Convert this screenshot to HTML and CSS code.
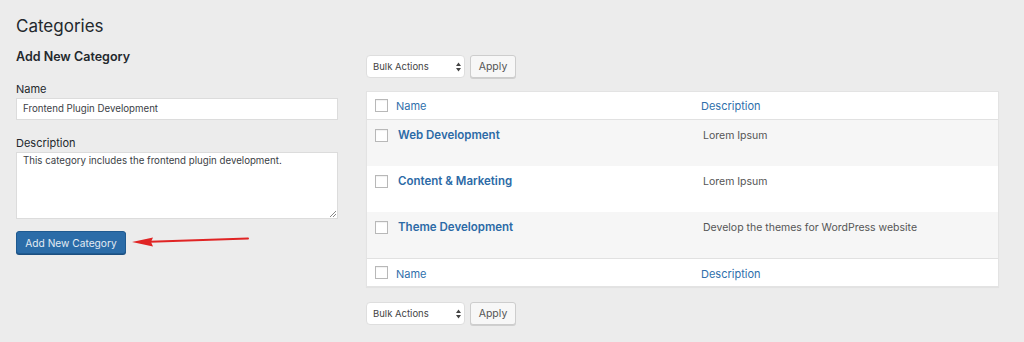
FILE: index.html
```html
<!DOCTYPE html>
<html>
<head>
<meta charset="utf-8">
<link rel="stylesheet" href="styles.css">
</head>
<body>
<div class="wrap">
  <h1 class="title">Categories</h1>
  <div class="cols">
    <div class="left">
      <h2 class="subtitle">Add New Category</h2>
      <label class="label label-name">Name</label>
      <div class="input">Frontend Plugin Development</div>
      <label class="label label-desc">Description</label>
      <div class="textarea">This category includes the frontend plugin development.
        <svg class="grip" width="7" height="7" viewBox="0 0 7 7"><path d="M1 7 L7 1 M4 7 L7 4" stroke="#888" stroke-width="1" fill="none"/></svg>
      </div>
      <div class="submit-row">
        <button class="btn-primary">Add New Category</button>
        <svg class="arrow" width="118" height="12" viewBox="0 0 118 12">
          <path d="M116 2.5 L18 5.8" stroke="#e02424" stroke-width="2" fill="none" stroke-linecap="round"/>
          <path d="M0 6 L21 1.5 L19 6 L21 10.5 Z" fill="#e02424"/>
        </svg>
      </div>
    </div>
    <div class="right">
      <div class="tablenav">
        <div class="select">Bulk Actions<span class="sel-arrows"><svg width="5" height="10" viewBox="0 0 5 10"><path d="M0 4 L2.5 0.5 L5 4 Z M0 6 L2.5 9.5 L5 6 Z" fill="#444"/></svg></span></div>
        <button class="btn">Apply</button>
      </div>
      <div class="table">
        <div class="row head">
          <div class="cb"><span class="check"></span></div>
          <div class="col-name"><a class="hlink">Name</a></div>
          <div class="col-desc"><a class="hlink">Description</a></div>
        </div>
        <div class="row item alt">
          <div class="cb"><span class="check"></span></div>
          <div class="col-name"><a class="name">Web Development</a></div>
          <div class="col-desc desc">Lorem Ipsum</div>
        </div>
        <div class="row item">
          <div class="cb"><span class="check"></span></div>
          <div class="col-name"><a class="name">Content &amp; Marketing</a></div>
          <div class="col-desc desc">Lorem Ipsum</div>
        </div>
        <div class="row item alt">
          <div class="cb"><span class="check"></span></div>
          <div class="col-name"><a class="name">Theme Development</a></div>
          <div class="col-desc desc">Develop the themes for WordPress website</div>
        </div>
        <div class="row foot">
          <div class="cb"><span class="check"></span></div>
          <div class="col-name"><a class="hlink">Name</a></div>
          <div class="col-desc"><a class="hlink">Description</a></div>
        </div>
      </div>
      <div class="tablenav bottom">
        <div class="select">Bulk Actions<span class="sel-arrows"><svg width="5" height="10" viewBox="0 0 5 10"><path d="M0 4 L2.5 0.5 L5 4 Z M0 6 L2.5 9.5 L5 6 Z" fill="#444"/></svg></span></div>
        <button class="btn">Apply</button>
      </div>
    </div>
  </div>
</div>
</body>
</html>
```

FILE: styles.css
```css
html, body {
  margin: 0;
  padding: 0;
  background: #ececec;
  font-family: Inter, "Noto Sans", "Liberation Sans", sans-serif;
  color: #23282d;
}
.wrap {
  padding: 12px 25px 0 16px;
}
.title {
  margin: 0;
  font-size: 17px;
  font-weight: 400;
  line-height: 28px;
  color: #23282d;
}
.cols {
  display: flex;
  gap: 28px;
}
.left {
  width: 322px;
  flex: none;
  display: flex;
  flex-direction: column;
}
.subtitle {
  margin: 7px 0 0 0;
  font-size: 12.5px;
  font-weight: 600;
  line-height: 20px;
}
.label {
  display: block;
  font-size: 11px;
  line-height: 18px;
  color: #23282d;
}
.label-name { margin-top: 13px; }
.label-desc { margin-top: 14px; }
.input {
  box-sizing: border-box;
  height: 22px;
  background: #fff;
  border: 1px solid #dcdcdc;
  font-size: 9.7px;
  line-height: 20px;
  padding: 0 6px;
  color: #3c4146;
}
.textarea {
  position: relative;
  box-sizing: border-box;
  height: 67px;
  background: #fff;
  border: 1px solid #dcdcdc;
  font-size: 9.7px;
  line-height: 14px;
  padding: 1px 6px;
  color: #3c4146;
}
.grip {
  position: absolute;
  right: 1px;
  bottom: 1px;
}
.submit-row {
  margin-top: 12px;
  display: flex;
  align-items: center;
}
.btn-primary {
  box-sizing: border-box;
  width: 110px;
  height: 23px;
  background: #2b6ca8;
  border: 1px solid #1f5a90;
  border-radius: 3px;
  box-shadow: 0 1px 0 #1c4f80;
  color: #e3ebf4;
  font-family: inherit;
  font-size: 10.2px;
  padding: 0;
}
.arrow {
  margin-left: 6px;
  margin-top: -2px;
}
.right {
  flex: 1;
  padding-top: 15px;
}
.tablenav {
  display: flex;
  gap: 5px;
  align-items: flex-start;
  height: 24px;
}
.tablenav.bottom {
  margin-top: 15px;
}
.select {
  box-sizing: border-box;
  width: 99px;
  height: 23px;
  background: #fff;
  border: 1px solid #dedede;
  border-radius: 4px;
  font-size: 9.5px;
  line-height: 21px;
  padding-left: 6px;
  color: #444;
  display: flex;
  justify-content: space-between;
  align-items: center;
}
.sel-arrows {
  display: flex;
  padding-right: 3px;
}
.btn {
  box-sizing: border-box;
  width: 46px;
  height: 23px;
  background: #f7f7f7;
  border: 1px solid #cdcdcd;
  border-radius: 3px;
  box-shadow: 0 1px 0 #cfcfcf;
  color: #555;
  font-family: inherit;
  font-size: 10.5px;
  padding: 0;
}
.table {
  margin-top: 12px;
  background: #fff;
  border: 1px solid #e3e3e3;
  box-shadow: 0 1px 1px rgba(0,0,0,0.04);
}
.row {
  display: grid;
  grid-template-columns: 29px 305px 1fr;
  box-sizing: border-box;
}
.row.head {
  height: 28px;
  border-bottom: 1px solid #e1e1e1;
  align-items: center;
  padding-bottom: 3px;
}
.row.foot {
  height: 28px;
  border-top: 1px solid #e1e1e1;
  align-items: center;
  padding-bottom: 2px;
}
.row.item {
  height: 46px;
  align-items: start;
  padding-top: 9px;
}
.row.alt {
  background: #f6f6f6;
}
.cb {
  padding-left: 8px;
  display: flex;
}
.row.head .cb { padding-top: 3px; }
.row.foot .cb { padding-top: 2px; }
.check {
  box-sizing: border-box;
  width: 13px;
  height: 13px;
  background: #fff;
  border: 1px solid #b8b8b8;
  box-shadow: inset 0 1px 1px rgba(0,0,0,0.06);
}
.hlink {
  font-size: 11px;
  line-height: 14px;
  color: #2f6fab;
}
.name {
  display: block;
  padding-left: 2px;
  font-size: 11.5px;
  font-weight: 600;
  line-height: 13px;
  color: #2c6aa6;
}
.desc {
  padding-left: 2px;
  font-size: 10.5px;
  line-height: 13px;
  color: #555;
}
```
